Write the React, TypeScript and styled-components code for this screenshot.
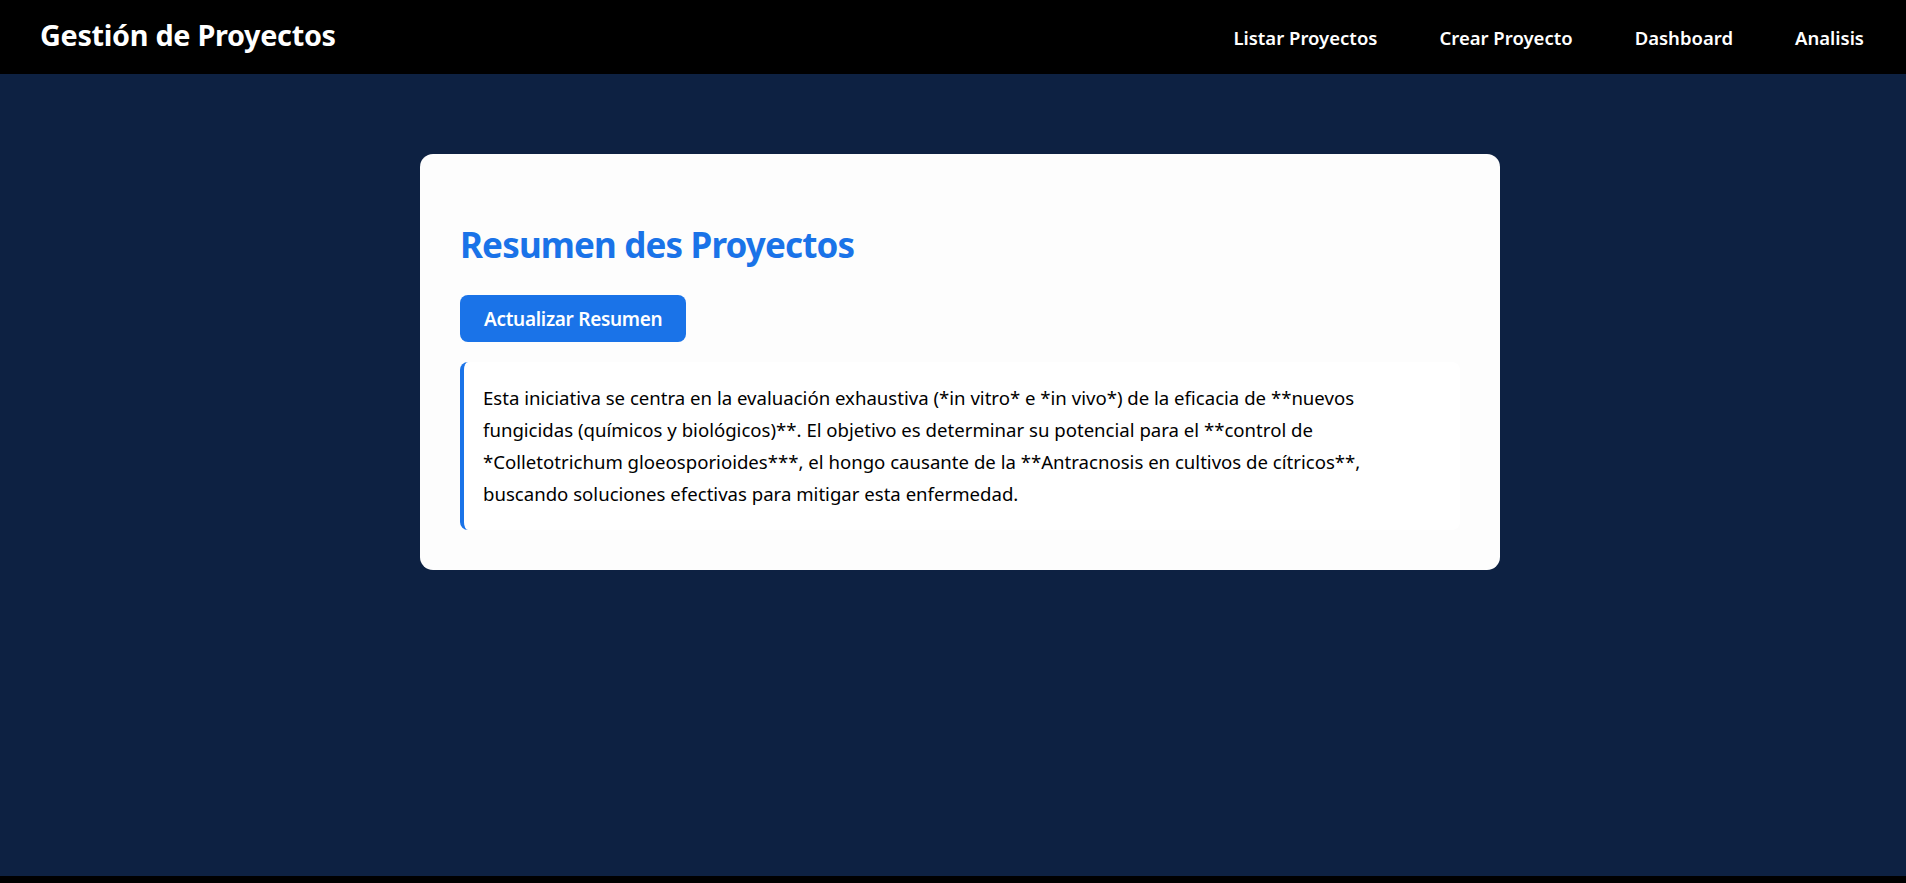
import React from "react";
import styled, { createGlobalStyle } from "styled-components";

const Global = createGlobalStyle`
  html, body {
    margin: 0;
    padding: 0;
    background: #000;
  }
  body {
    font-family: "Noto Sans", "Open Sans", sans-serif;
  }
  * { box-sizing: border-box; }
`;

const Page = styled.div`
  display: flex;
  flex-direction: column;
  min-height: 883px;
  background: #000;
`;

const NavBar = styled.nav`
  height: 74px;
  background: #000;
  display: flex;
  align-items: center;
  justify-content: space-between;
  padding: 0 42px 0 40px;
`;

const Brand = styled.div`
  color: #fff;
  font-size: 28.8px;
  font-weight: 700;
  letter-spacing: -0.3px;
  padding-bottom: 5px;
`;

const NavLinks = styled.div`
  display: flex;
  gap: 62px;
`;

const NavLink = styled.a`
  color: #fff;
  font-size: 18.5px;
  font-weight: 600;
  text-decoration: none;
  cursor: pointer;
`;

const Main = styled.main`
  height: 802px;
  background: #0d2142;
  display: flex;
  justify-content: center;
  align-items: flex-start;
  padding: 80px 0 0 14px;
`;

const Card = styled.section`
  width: 1080px;
  background: #fdfdfd;
  border-radius: 13px;
  padding: 40px;
  display: flex;
  flex-direction: column;
  align-items: flex-start;
`;

const Title = styled.h2`
  margin: 27px 0 26px;
  color: #1a73e8;
  font-size: 35px;
  font-weight: 700;
  line-height: 48px;
  letter-spacing: -0.85px;
`;

const Button = styled.button`
  background: #1a73e8;
  color: #fff;
  border: none;
  border-radius: 8px;
  height: 47px;
  padding: 0 24px;
  font-family: inherit;
  font-size: 19px;
  font-weight: 600;
  cursor: pointer;
  letter-spacing: -0.3px;
`;

const Summary = styled.div`
  margin-top: 20px;
  width: 100%;
  background: #fff;
  border-left: 4px solid #1a73e8;
  border-radius: 8px;
  padding: 20px 20px 20px 19px;
  color: #000;
  font-size: 18.6px;
  line-height: 32px;
`;

export default function App() {
  return (
    <>
      <Global />
      <Page>
        <NavBar>
          <Brand>Gestión de Proyectos</Brand>
          <NavLinks>
            <NavLink>Listar Proyectos</NavLink>
            <NavLink>Crear Proyecto</NavLink>
            <NavLink>Dashboard</NavLink>
            <NavLink>Analisis</NavLink>
          </NavLinks>
        </NavBar>
        <Main>
          <Card>
            <Title>Resumen des Proyectos</Title>
            <Button>Actualizar Resumen</Button>
            <Summary>
              Esta iniciativa se centra en la evaluación exhaustiva (*in vitro* e *in vivo*) de la eficacia de **nuevos fungicidas (químicos y biológicos)**. El objetivo es determinar su potencial para el **control de *Colletotrichum gloeosporioides***, el hongo causante de la **Antracnosis en cultivos de cítricos**, buscando soluciones efectivas para mitigar esta enfermedad.
            </Summary>
          </Card>
        </Main>
      </Page>
    </>
  );
}
